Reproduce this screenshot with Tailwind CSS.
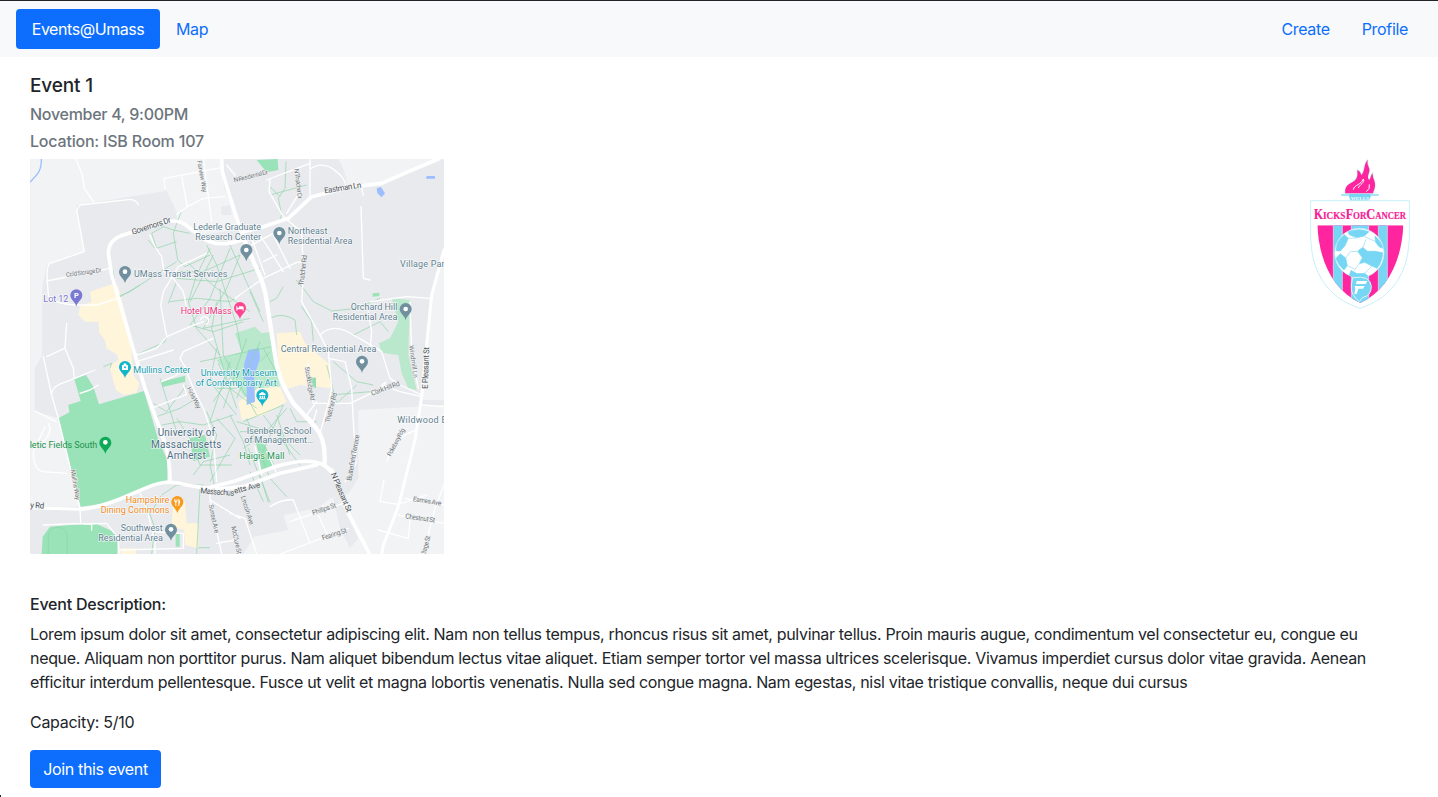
<!DOCTYPE html>
<html lang="en">
<head>
<meta charset="utf-8">
<title>Events@Umass</title>
<script src="https://cdn.jsdelivr.net/npm/@tailwindcss/browser@4"></script>
</head>
<body class="h-[797px] overflow-hidden bg-white font-['Inter',sans-serif] text-base text-[#212529]">
<div class="relative flex h-[797px] flex-col border-t border-[#212529]">
  <nav class="flex h-14 shrink-0 items-center justify-between bg-[#f8f9fa] px-4 text-[#0d6efd]">
    <div class="flex items-center">
      <a class="flex h-10 w-36 items-center justify-center rounded bg-[#0d6efd] tracking-[-0.44px] text-white">Events@Umass</a>
      <a class="px-4 tracking-[-0.35px]">Map</a>
    </div>
    <div class="flex items-center tracking-[-0.33px]">
      <a class="px-4">Create</a>
      <a class="pr-[14px] pl-4">Profile</a>
    </div>
  </nav>
  <main class="flex flex-col pt-[17px] pr-7 pl-[30px]">
    <h1 class="h-6 text-[19px] leading-6 font-medium tracking-[-0.14px]">Event 1</h1>
    <h2 class="mt-1.5 h-5 leading-5 font-medium tracking-[-0.28px] text-[#6c757d]">November 4, 9:00PM</h2>
    <h2 class="mt-[7px] h-5 leading-5 font-medium tracking-[-0.2px] text-[#6c757d]">Location: ISB Room 107</h2>
    <div class="mt-2 flex h-[395px] items-start justify-between">
      <svg class="h-[395px] w-[414px]" viewBox="0 12 1242 1185" font-family="Roboto, sans-serif">
        <defs>
          <g id="pin"><path d="M0 33C-3 18-18 12-18-1A18 18 0 0 1 18-1C18 12 3 18 0 33Z"/></g>
        </defs>
        <rect y="12" width="1242" height="1185" fill="#e8eaed"/>
        <g fill="#f1f3f4">
          <path d="M0 12H572L582 100 630 205V225L500 240 440 190 440 170 410 108 140 150 163 290 50 330 37 400V600L14 640V768L85 790 150 1055H0Z"/>
          <path d="M925 12Q950 50 950 95L1060 85 1242 12ZM1242 270L1200 425 1175 735H1242ZM985 765L1242 750V1197H640L672 1145 775 1125 760 1080 860 1060 985 970Z"/>
        </g>
        <path fill="#e8eaed" d="M855 1005L900 960 985 970 960 1010 930 1035 985 1150 960 1180 930 1120 910 1030ZM572 155L600 150 605 180 575 180Z"/>
        <g fill="#9ae2b8">
          <path d="M85 790L118 772 115 750 152 738 133 672 168 660 190 695 207 748 342 708 385 855 412 915V975L330 1005 230 1045 152 1055Z"/>
          <path d="M35 1197L38 1145 60 1115 110 1111 200 1107 250 1130 262 1160V1197Z"/>
          <path d="M680 15L743 12 745 45 710 52ZM437 1137h12v38h-12zM1028 415l20-2v10l-20 2ZM678 855L705 870 735 935 695 950ZM480 850L525 840 540 905 490 918ZM395 680L465 662 466 680 398 696Z"/>
        </g>
        <g fill="#b9e8cd">
          <path d="M1085 430L1140 435 1135 600 1160 705 1135 700 1115 655 1105 600 1055 593 1047 565 1080 550 1105 500Z"/>
          <path d="M615 535L675 515 695 535 722 530 740 635 750 695 680 700 650 735 615 685 560 615 635 590Z"/>
        </g>
        <g fill="#fef5da">
          <path d="M625 740L685 700 750 695 770 740 700 780 635 795ZM740 535L810 530 825 565 900 630 905 700 810 690 760 705 745 625Z"/>
          <path d="M180 410L245 388 265 395 300 530 310 660 328 685 320 715 280 720 258 705 238 635 265 615 262 600 230 580 225 555 208 535 205 500 165 500 145 480 150 455 185 440Z"/>
          <path d="M430 1025L465 1040 470 1105H505V1180L465 1170 462 1125 425 1115ZM272 1180h45v17h-45z"/>
        </g>
        <path fill="#94dcb4" d="M838 668h20v30h-20z"/>
        <g fill="#9dbeff">
          <path d="M655 585L687 580 690 610 672 665 675 740 650 750V675L640 670 643 625ZM1040 100L1053 96 1065 115 1055 127 1042 115ZM1190 63h25v8h-27z"/>
        </g>
        <path d="M34 12Q35 45 18 62L0 82" fill="none" stroke="#9dbeff" stroke-width="4"/>

        <g fill="none" stroke="#8bd5a8" stroke-width="2">
          <path d="M453 172L442 200 430 235 443 315 465 335 540 300M365 235L400 215 430 225 480 235M365 235L380 280 440 260M355 255L375 280M440 320L400 345 330 390 262 430M248 345L262 420 312 600M325 597L405 560 410 540"/>
          <path d="M530 270L560 330 590 420 620 510 635 590M540 280L500 360 475 440 500 520 570 600M475 325L560 400 660 470M450 350L520 350 630 300M440 370L560 380 690 340M550 300L480 440M600 280L540 430 480 510M630 300L590 400 520 520M420 440L500 430 600 440 660 400M480 510L550 530 640 500M570 400L580 600M520 520L660 490M600 270L640 360 690 470M415 445L440 380M660 410L700 500"/>
          <path d="M560 440L545 520 580 640 620 760M560 580L540 680 620 780M510 620L725 575M565 625L600 700 680 760M580 600L680 780M600 620L540 800M620 640L550 740M690 560L620 730M700 580L765 700M640 800L760 750M560 700L620 700M650 550L580 760M690 620L720 590M600 780L640 860 660 930M560 790L615 850 540 980"/>
          <path d="M700 780L810 930M760 750L690 910M770 760L700 840 640 880M650 790L720 970 770 1025M655 880L720 1042M780 760L800 800 860 800M680 860L790 850M630 830L740 830 810 900M740 780L780 900M620 800L720 830"/>
          <path d="M768 20L765 100 745 130 755 180 748 200M720 120L830 90M720 95L750 125M798 375L820 400 850 440 905 468 980 460 1050 430M760 395L740 430 720 440M720 490Q755 470 795 495L800 540M850 560L845 500 815 455M970 540L1050 500 1075 530"/>
          <path d="M370 745L410 770 470 690M380 785L450 760 500 730M390 670L415 750 440 830M395 810L450 800 520 810 610 780M440 790L480 850M480 850L510 930 605 930M530 770L560 840 540 930 555 1000M490 960L520 920 600 900M510 1000L500 1197M370 1060L395 1020 440 990 520 990M350 1050L375 1120 365 1197M505 1178H540M690 960L715 1042M660 950L700 1040M890 630L920 745 980 690M910 620L980 680 1030 690M905 720L1020 710M220 635L245 625 240 640M262 425L300 410 330 390"/>
          <rect x="55" y="1117" width="56" height="110" rx="26"/>
        </g>

        <g fill="none" stroke="#fff" stroke-linecap="round" stroke-linejoin="round">
          <g stroke-width="4">
            <path d="M138 12L157 60 163 100 192 142M325 150Q318 132 295 134L150 150 140 165 163 290 60 325Q48 335 52 380L55 420Q60 445 140 450L200 450 262 430M50 378L240 340M405 100L402 70 575 38M455 65L472 155 440 178M472 155L520 130 585 125M520 12L545 200M590 30L615 60"/>
            <path d="M110 505L105 580 130 640 133 670M50 605L103 580M40 605L65 720 85 790 150 1060M65 715Q70 690 110 680L195 645M150 715L180 705 205 690M15 768L78 800M45 815L10 890Q10 945 40 950L110 955M55 805Q70 830 40 860"/>
            <path d="M360 240L375 275 395 305 402 350 430 370M530 295L445 335 400 410 392 450 410 545 480 515 520 500M430 370L460 410 468 450M512 494a12 12 0 1 1 16 14M320 600L380 580 410 545M320 620L430 585"/>
            <path d="M395 680L440 660 468 640 450 610 460 590 550 550M370 758L470 718 460 690M465 640L490 700 520 760 550 850 560 980M330 1015L350 1060 375 1160V1197M40 1110L150 1105 165 1107 230 1105 265 1150 267 1197M150 1060L152 1105M185 1107V1125M270 1185L460 1180M370 1130L460 1135V1180M540 1000V1035L575 1197M540 1035L630 1090M560 1165L615 1155M600 1075L645 1090 680 1197"/>
            <path d="M720 75L717 110 760 185 815 230 820 360 815 440 870 540 895 590 905 700 895 745 870 835M800 50L810 110 770 175M840 12V120M710 75L840 25M840 42Q880 15 920 50Q945 70 948 95M995 100L1000 120M993 155L1000 370 1020 375M615 430L700 370 800 322 815 320M665 250L705 360M690 240L760 350M665 270L740 230M700 320L740 300M730 240L780 340M1020 440L1130 425 1200 430M1015 470L1025 530 1020 590M1055 590L1080 670 1110 690 1175 720"/>
            <path d="M870 540Q910 500 970 540L1040 580 1055 590M895 610L945 620 965 700 970 800 978 925 945 980M835 625V680L850 745 960 745 1055 700Q1080 670 1055 690L1110 710 1175 725M860 765L850 800 830 780 860 740M1140 440L1145 590 1165 700M1175 750L1242 755"/>
            <path d="M1160 825Q1080 850 1072 920M1062 975L1050 1040 1105 1048 1190 1020M1125 1030L1242 1050M1105 1080L1242 1105M1045 1125L1135 1150 1140 1095M1180 1197L1215 1060 1242 990M720 1055Q760 1030 790 1035L838 1160M780 1100L955 1040M750 1197L955 1120M865 1080L890 1135M675 875L695 960M710 890L738 950"/>
          </g>
          <path stroke-width="9" d="M0 1058L150 1063M1242 285L1205 420 1187 600 1175 725 1155 855 1105 1055 1060 1170 1055 1197"/>
          <path stroke-width="11" d="M635 255Q560 280 520 250L460 205Q435 190 380 207L290 237Q235 250 235 295L245 360 315 600 345 700 400 850Q420 900 420 980M635 232L700 215 775 190 845 125 960 97 1055 85 1135 50 1225 12M575 12L577 50 595 110 635 235M150 1063Q200 1060 270 1032L350 998Q410 970 470 990L530 1000 615 978 735 935Q840 905 880 930M560 1003L640 995 750 955 860 930M905 945L955 1075 1020 1200"/>
          <path stroke-width="13" d="M635 235L675 330Q705 390 710 440L735 600Q742 670 790 745L855 815Q890 855 883 930L905 950"/>
        </g>

        <g fill="#6e7277" font-size="19" stroke="#f1f3f4" stroke-width="3" paint-order="stroke">
          <text transform="translate(502 18) rotate(80)" textLength="96">Fairview Way</text>
          <text transform="translate(613 82) rotate(-14)" textLength="105">N Residential Dr</text>
          <text transform="translate(793 42) rotate(83)" textLength="90">N Thatcher Dr</text>
          <text transform="translate(109 366) rotate(-8)" textLength="107">Cold Storage Dr</text>
          <text transform="translate(820 392) rotate(-83)" textLength="92" font-size="21">Thatcher Rd</text>
          <text transform="translate(470 700) rotate(63)" textLength="70">Hicks Way</text>
          <text transform="translate(122 945) rotate(80)" textLength="92">Mullins Way</text>
          <text transform="translate(536 1050) rotate(78)" textLength="87" font-size="20">Sunset Ave</text>
          <text transform="translate(604 1115) rotate(78)" textLength="85" font-size="20">McClure St</text>
          <text transform="translate(632 1025) rotate(72)" textLength="90" font-size="20">Lincoln Ave</text>
          <text transform="translate(824 637) rotate(80)" textLength="102">Stockbridge Rd</text>
          <text transform="translate(899 804) rotate(-76)" textLength="92" font-size="21">Thatcher Rd</text>
          <text transform="translate(1026 722) rotate(-20)" textLength="90" font-size="21">Clark Hill Rd</text>
          <text transform="translate(964 978) rotate(-80)" textLength="140" font-size="21">Butterfield Terrace</text>
          <text transform="translate(1082 905) rotate(-62)" textLength="92">Pokeberry Rdg</text>
          <text transform="translate(1137 572) rotate(82)" textLength="98">Windmill Ln</text>
          <text transform="translate(849 1081) rotate(-19)" textLength="75" font-size="21">Phillips St</text>
          <text transform="translate(878 1156) rotate(-18)" textLength="77" font-size="21">Fearing St</text>
          <text transform="translate(1148 1038) rotate(9)" textLength="86" font-size="20">Eames Ave</text>
          <text transform="translate(1125 1090) rotate(8)" textLength="90" font-size="21">Chestnut St</text>
          <text transform="translate(1187 1197) rotate(-75)" textLength="55" font-size="20">llage St</text>
          <g fill="#4d5257" font-size="24">
            <text transform="translate(308 239) rotate(-18)" textLength="122">Governors Dr</text>
            <text transform="translate(884 115) rotate(-9)" textLength="112">Eastman Ln</text>
            <text transform="translate(0 1058) rotate(4)" textLength="42">y Rd</text>
            <text transform="translate(511 1015) rotate(4)" textLength="102">Massachus</text>
            <text transform="translate(614 1016) rotate(-14)" textLength="80">etts Ave</text>
            <text transform="translate(902 957) rotate(67)" textLength="126">N Pleasant St</text>
            <text transform="translate(1193 702) rotate(-88)" textLength="126">E Pleasant St</text>
          </g>
        </g>

        <g font-size="27" stroke="#fff" stroke-opacity=".75" stroke-width="4" paint-order="stroke">
          <g fill="#5f7f90">
            <text x="490" y="226" textLength="203">Lederle Graduate</text>
            <text x="496" y="255" textLength="197">Research Center</text>
            <text x="773" y="237" textLength="119">Northeast</text>
            <text x="773" y="267" textLength="194">Residential Area</text>
            <text x="312" y="367" textLength="280">UMass Transit Services</text>
            <text x="1110" y="337" textLength="148">Village Park</text>
            <text x="962" y="465" textLength="140">Orchard Hill</text>
            <text x="908" y="495" textLength="194">Residential Area</text>
            <text x="752" y="591" textLength="287">Central Residential Area</text>
            <text x="650" y="836" textLength="194">Isenberg School</text>
            <text x="643" y="865" textLength="206">of Management…</text>
            <text x="1102" y="804" textLength="155">Wildwood El</text>
            <text x="272" y="1127" textLength="126">Southwest</text>
            <text x="205" y="1157" textLength="194">Residential Area</text>
          </g>
          <g fill="#4e6f84" font-size="30">
            <text x="383" y="843" textLength="172">University of</text>
            <text x="363" y="878" textLength="211">Massachusetts</text>
            <text x="411" y="913" textLength="116">Amherst</text>
          </g>
          <text x="40" y="440" textLength="75" fill="#7a76cf">Lot 12</text>
          <text x="452" y="476" textLength="153" fill="#f0307b">Hotel UMass</text>
          <g fill="#129eaf">
            <text x="310" y="653" textLength="171">Mullins Center</text>
            <text x="512" y="662" textLength="229">University Museum</text>
            <text x="497" y="692" textLength="243">of Contemporary Art</text>
          </g>
          <g fill="#23924f">
            <text x="-1" y="880" textLength="203" stroke="none">letic Fields South</text>
            <text x="628" y="912" textLength="135">Haigis Mall</text>
          </g>
          <g fill="#f08a1c">
            <text x="287" y="1043" textLength="131">Hampshire</text>
            <text x="212" y="1073" textLength="206">Dining Commons</text>
          </g>
        </g>

        <g fill="#70909f">
          <use href="#pin" x="285" y="352"/><use href="#pin" x="748" y="235"/><use href="#pin" x="649" y="286"/>
          <use href="#pin" x="1127" y="463"/><use href="#pin" x="996" y="621"/><use href="#pin" x="423" y="1125"/>
        </g>
        <use href="#pin" x="139" y="422" fill="#7a78d2"/>
        <use href="#pin" x="630" y="460" fill="#ff4590"/>
        <use href="#pin" x="285" y="637" fill="#12b5cb"/>
        <use href="#pin" x="697" y="722" fill="#12b5cb"/>
        <use href="#pin" x="226" y="864" fill="#0fa958"/>
        <use href="#pin" x="442" y="1042" fill="#f99a1c"/>
        <g fill="#fff">
          <circle cx="285" cy="350" r="7"/><circle cx="748" cy="234" r="7"/><circle cx="649" cy="285" r="7"/>
          <circle cx="1127" cy="462" r="7"/><circle cx="996" cy="619" r="7"/><circle cx="423" cy="1123" r="7"/>
          <circle cx="226" cy="862" r="7"/>
          <text x="132" y="429" font-size="22" font-weight="700">P</text>
          <path d="M619 453h3v5h5v-4h10q4 0 4 4v9h-3v-4h-16v4h-3z"/>
          <path d="M276 631h4q0-6 5-6t5 6h4v14h-18z"/><circle cx="285" cy="637" r="3" fill="#12b5cb"/>
          <path d="M687 717l10-7 10 7v3h-20zM689 722h4v7h-4zm6 0h4v7h-4zm6 0h4v7h-4zm-14 8h20v3h-20z"/>
          <path d="M433 1031h2v6h2v-6h2v6h2v-6h1v8q0 3-3 3v11h-3v-11q-3 0-3-3zM445 1053v-22q5 1 5 9v5h-2v8z"/>
        </g>
      </svg>

      <svg class="h-[150px] w-[100px]" viewBox="30 27 300 450">
        <path d="M32 152H328V260C326 360 285 440 180 475C75 440 34 360 32 260Z" fill="#fff" stroke="#c9f0f6" stroke-width="3"/>
        <path d="M136 130C133 112 143 103 158 96C176 86 172 72 172 60C180 63 183 72 184 76C196 62 190 45 203 29C199 48 213 52 207 68C203 78 202 85 208 90C213 83 212 75 218 70C217 85 227 95 225 108C224 120 219 125 219 130Z" fill="#ff259e" stroke="#c9f0f6" stroke-width="4" paint-order="stroke"/>
        <path d="M160 119C162 104 184 105 190 87C196 98 178 104 175 114M199 125Q211 117 208 103" fill="none" stroke="#fff" stroke-width="3"/>
        <path d="M124 132H236V138H213L207 151H152L146 138H124Z" fill="#78d6f5"/>
        <path d="M124 135H148M211 135H236" stroke="#d9f5fa" stroke-width="3"/>
        <text x="152" y="149" font-family="Liberation Serif, serif" font-weight="700" font-size="14" textLength="55" lengthAdjust="spacingAndGlyphs" fill="#fff">WELLS</text>
        <g font-family="Liberation Serif, serif" font-weight="700" fill="#f52093" stroke="#f52093" stroke-width=".6">
          <text x="42" y="206" font-size="43" textLength="27" lengthAdjust="spacingAndGlyphs">K</text>
          <text x="69" y="206" font-size="31" textLength="67" lengthAdjust="spacingAndGlyphs">ICKS</text>
          <text x="137" y="206" font-size="43" textLength="22" lengthAdjust="spacingAndGlyphs">F</text>
          <text x="159" y="206" font-size="31" textLength="40" lengthAdjust="spacingAndGlyphs">OR</text>
          <text x="199" y="206" font-size="43" textLength="27" lengthAdjust="spacingAndGlyphs">C</text>
          <text x="226" y="206" font-size="31" textLength="92" lengthAdjust="spacingAndGlyphs">ANCER</text>
        </g>
        <clipPath id="shield"><path d="M52 226H310C305 330 265 420 181 459C97 420 57 330 52 226Z"/></clipPath>
        <g clip-path="url(#shield)">
          <path d="M50 220H312V465H50Z" fill="#ff259e"/>
          <path d="M100 220h27v245h-27zM154 220h52v245h-52zM235 220h27v245h-27z" fill="#78d6f5"/>
          <path d="M100 220V465M127 220V465M154 220V465M206 220V465M235 220V465M262 220V465" stroke="#d9e6f8" stroke-width="2"/>
        </g>
        <circle cx="178" cy="309" r="74" fill="#fff" stroke="#c9ecf6" stroke-width="2"/>
        <g fill="#78d6f5" stroke="#78d6f5" stroke-width="2" stroke-linejoin="round">
          <path d="M144 245Q177 233 207 245L193 258 170 263 148 254Z"/>
          <path d="M112 279Q121 262 133 254L145 265 135 287 121 303 108 302Z"/>
          <path d="M108 325L121 311 137 324 142 347 132 360Q114 345 108 325Z"/>
          <path d="M173 304L188 292 202 304 225 304 222 325 216 348 194 337 178 341 187 323Z"/>
          <path d="M225 258Q243 273 249 295L237 290 226 275Z"/>
          <path d="M225 304L248 308Q247 335 231 355L216 348Z"/>
          <path d="M153 361L171 371 194 370 204 378Q174 389 148 376Z"/>
        </g>
        <path d="M144 265L170 264M194 260L225 274M189 292L198 268M137 324L151 305 174 304M142 347L165 358 178 341M194 370L216 348" fill="none" stroke="#b5e7f6" stroke-width="3"/>
        <path d="M158 383Q213 375 214 410Q214 437 187 443L178 455Q166 446 163 438Q153 430 154 405Z" fill="#78d6f5" stroke="#d9f5fa" stroke-width="3"/>
        <path d="M170 393H202L197 402H168ZM164 408H194L189 416H175L170 432H163L166 416Z" fill="#fff"/>
      </svg>
    </div>
    <h3 class="mt-10 h-5 leading-5 font-medium tracking-[-0.23px]">Event Description:</h3>
    <p class="mt-2 leading-6 tracking-[-0.325px] whitespace-nowrap">Lorem ipsum dolor sit amet, consectetur adipiscing elit. Nam non tellus tempus, rhoncus risus sit amet, pulvinar tellus. Proin mauris augue, condimentum vel consectetur eu, congue eu<br>neque. Aliquam non porttitor purus. Nam aliquet bibendum lectus vitae aliquet. Etiam semper tortor vel massa ultrices scelerisque. Vivamus imperdiet cursus dolor vitae gravida. Aenean<br>efficitur interdum pellentesque. Fusce ut velit et magna lobortis venenatis. Nulla sed congue magna. Nam egestas, nisl vitae tristique convallis, neque dui cursus</p>
    <p class="mt-4 leading-6 tracking-[-0.29px]">Capacity: 5/10</p>
    <a class="mt-4 flex h-[38px] w-[131px] items-center justify-center rounded bg-[#0d6efd] tracking-[-0.34px] text-white">Join this event</a>
  </main>
  <span class="absolute bottom-0 left-0 h-0.5 w-px bg-[#212529]"></span>
</div>
</body>
</html>
